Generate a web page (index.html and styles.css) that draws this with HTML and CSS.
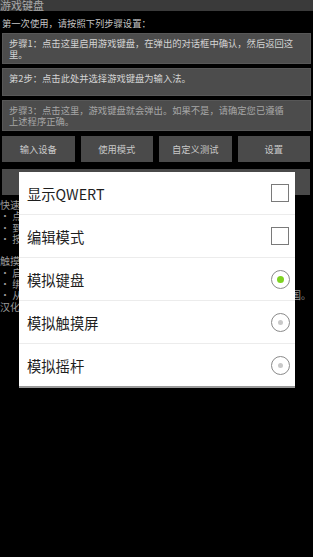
FILE: index.html
```html
<!DOCTYPE html>
<html lang="zh-CN">
<head>
    <meta charset="UTF-8">
    <meta name="viewport" content="width=device-width, initial-scale=1.0">
    <title>游戏键盘</title>
    <link rel="stylesheet" href="styles.css">
</head>
<body>

    <div class="screen">
        <div class="title-bar">游戏键盘</div>
        <div class="intro">第一次使用，请按照下列步骤设置：</div>

        <div class="step">步骤1：点击这里启用游戏键盘，在弹出的对话框中确认，然后返回这<br>里。</div>
        <div class="step">第2步：点击此处并选择游戏键盘为输入法。</div>
        <div class="step step-dim">步骤3：点击这里，游戏键盘就会弹出。如果不是，请确定您已遵循<br>上述程序正确。</div>

        <div class="btn-row">
            <div class="btn">输入设备</div>
            <div class="btn">使用模式</div>
            <div class="btn">自定义测试</div>
            <div class="btn">设置</div>
        </div>
        <div class="btn-row single">
            <div class="btn">帮助</div>
        </div>

        <div class="help">
            <p>快速入门</p>
            <p>• 点击</p>
            <p>• 到设置</p>
            <p>• 按下</p>
            <br>
            <p>触摸屏</p>
            <p>• 启用</p>
            <p>• 绑定</p>
            <p class="wide"><span>• 从列表中</span><span>国。</span></p>
            <p>汉化</p>
        </div>
    </div>

    <div class="dialog">
        <div class="option">
            <span>显示QWERT</span>
            <span class="checkbox"></span>
        </div>
        <div class="option">
            <span>编辑模式</span>
            <span class="checkbox"></span>
        </div>
        <div class="option">
            <span>模拟键盘</span>
            <span class="radio checked"></span>
        </div>
        <div class="option">
            <span>模拟触摸屏</span>
            <span class="radio"></span>
        </div>
        <div class="option">
            <span>模拟摇杆</span>
            <span class="radio"></span>
        </div>
    </div>

</body>
</html>
```

FILE: styles.css
```css
body {
    margin: 0;
    width: 313px;
    height: 557px;
    overflow: hidden;
    position: relative;
    background-color: #000;
    font-family: "Noto Sans CJK SC", "Noto Sans", sans-serif;
}
.screen {
    display: flex;
    flex-direction: column;
}
.title-bar {
    height: 11px;
    line-height: 10px;
    font-size: 11px;
    color: #a9a9a9;
    background-color: #3a3a3a;
    overflow: hidden;
}
.intro {
    margin-top: 5px;
    padding-left: 2px;
    font-size: 9.3px;
    line-height: 14px;
    color: #c4c4c4;
}
.step {
    margin: 3px 2px 1px 2px;
    padding: 4px 4px 3px 6px;
    min-height: 19px;
    line-height: 11px;
    background-color: #4c4c4c;
    border: 1px solid #575757;
    font-size: 9.3px;
    color: #d4d4d4;
    white-space: nowrap;
    overflow: hidden;
}
.step + .step {
    margin-top: 3px;
}
.step-dim {
    color: #a6a6a6;
}
.btn-row {
    display: grid;
    grid-template-columns: repeat(4, 1fr);
    gap: 6px;
    margin: 4px 3px 0 2px;
}
.btn-row.single {
    grid-template-columns: 1fr;
    margin-top: 7px;
}
.btn {
    height: 26px;
    line-height: 26px;
    text-align: center;
    background-color: #4a4a4a;
    font-size: 9.3px;
    color: #c8c8c8;
}
.help {
    margin-top: 4px;
    font-size: 10px;
    line-height: 11.3px;
    color: #9a9a9a;
}
.help p {
    margin: 0;
    white-space: nowrap;
}
.help .wide {
    display: flex;
    justify-content: space-between;
    padding-right: 2px;
}
.dialog {
    position: absolute;
    left: 19px;
    top: 172px;
    width: 276px;
    background-color: #fff;
    border-bottom: 2px solid #9a9a9a;
}
.option {
    height: 42px;
    display: flex;
    align-items: center;
    justify-content: space-between;
    padding: 0 5px 0 8px;
    border-bottom: 1px solid #ececec;
    font-size: 14.3px;
    color: #1e1e1e;
}
.option:last-child {
    border-bottom: none;
}
.checkbox {
    width: 16px;
    height: 16px;
    border: 1.5px solid #7a7a7a;
    margin-right: 1px;
}
.radio {
    width: 17px;
    height: 17px;
    border: 1.5px solid #8a8a8a;
    border-radius: 50%;
    display: flex;
    align-items: center;
    justify-content: center;
}
.radio::after {
    content: "";
    width: 5px;
    height: 5px;
    border-radius: 50%;
    background-color: #c8c8c8;
}
.radio.checked::after {
    width: 7px;
    height: 7px;
    background-color: #7ed321;
}
```
